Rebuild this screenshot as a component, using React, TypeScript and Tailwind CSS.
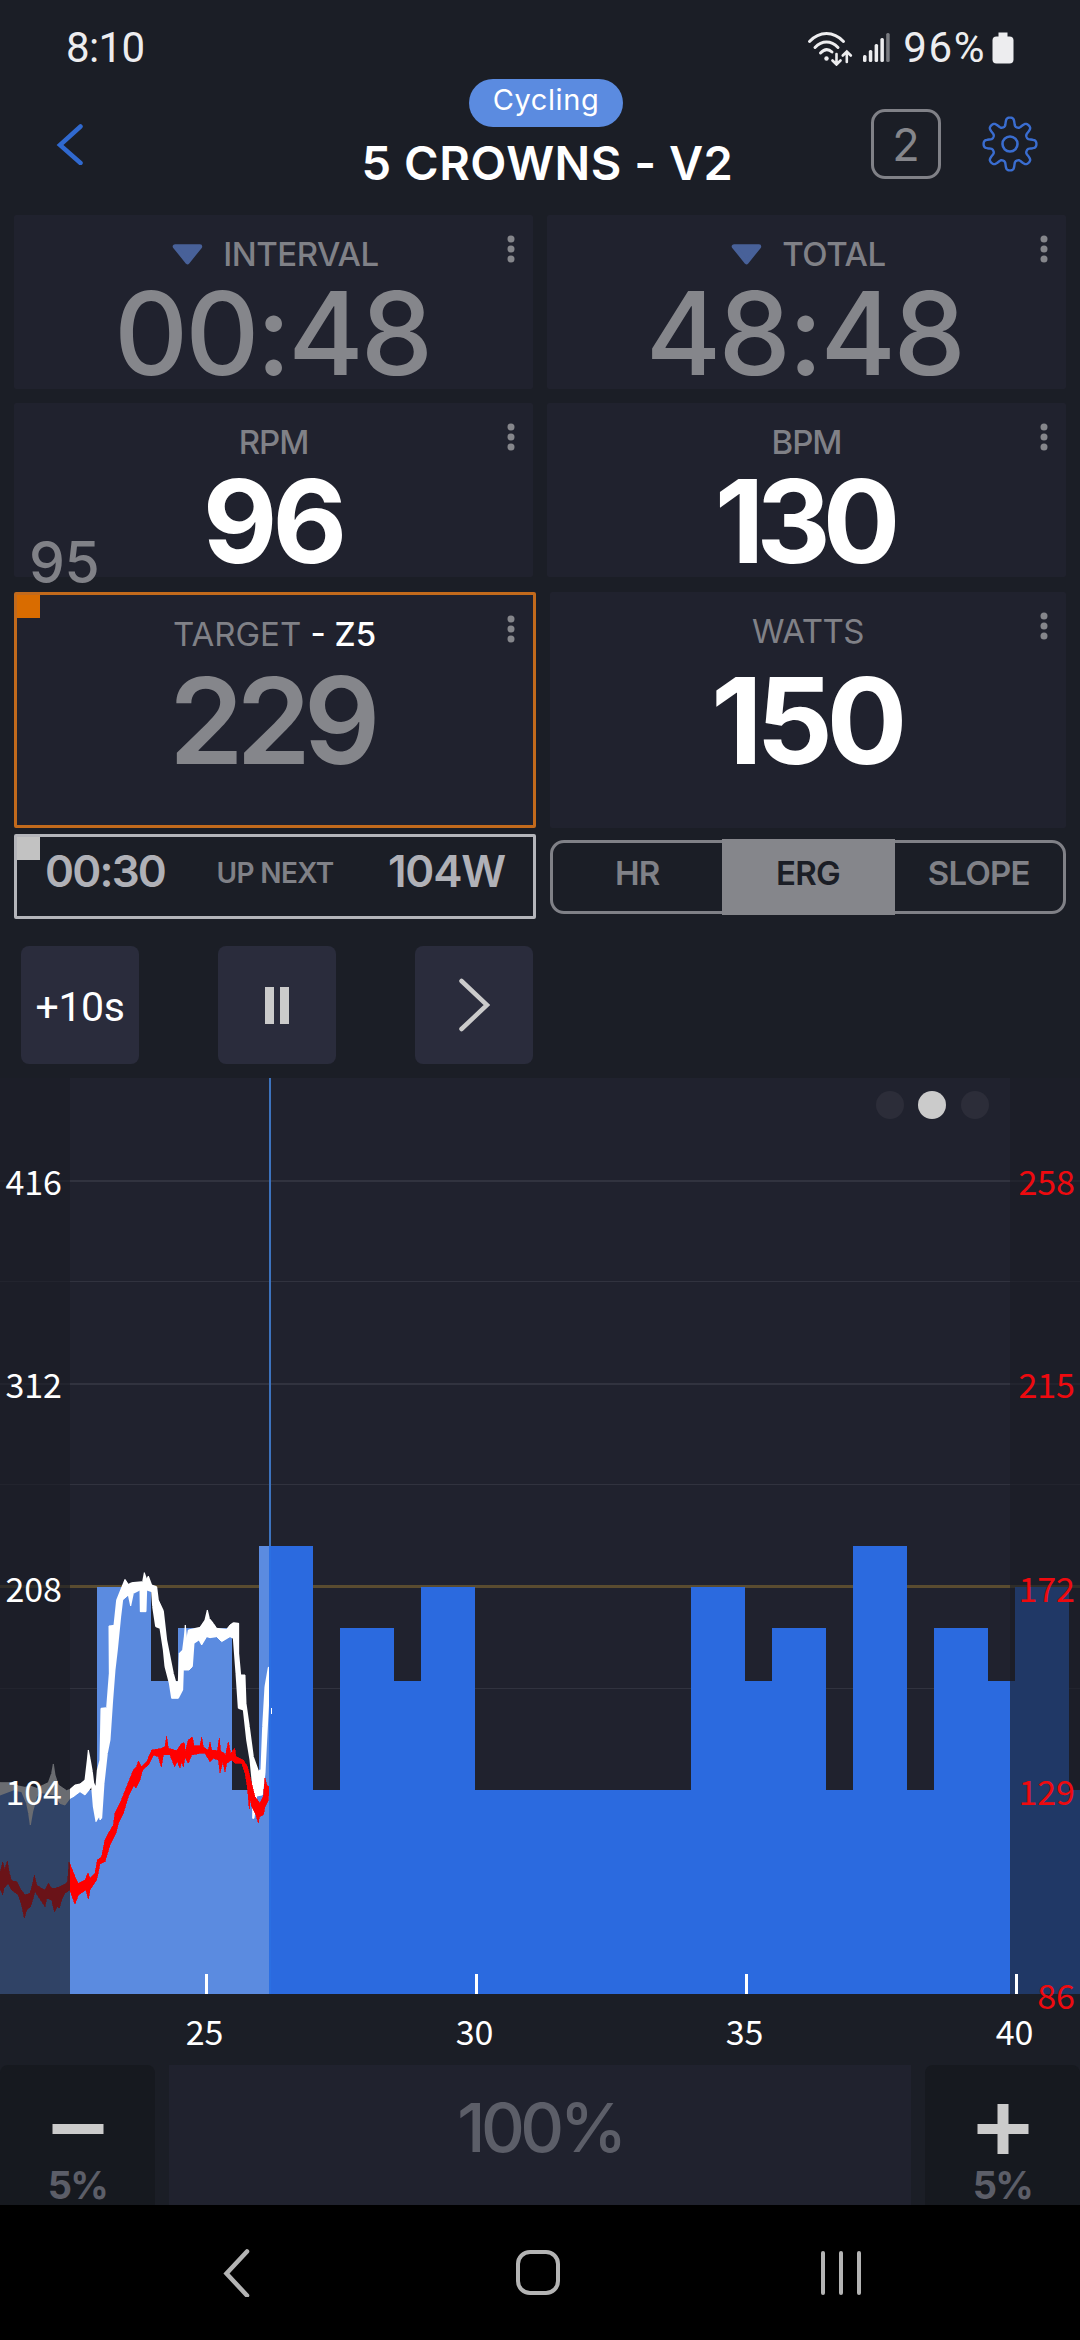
import clsx from 'clsx';
import { ReactNode } from 'react';

type Segment = { start: number; end: number; top: number };

// Workout blocks: x range and top edge, in chart pixels
const segments: Segment[] = [
  { start: 0, end: 97, top: 711.5 },
  { start: 97, end: 151, top: 509 },
  { start: 151, end: 178, top: 603 },
  { start: 178, end: 232, top: 550 },
  { start: 232, end: 259, top: 711.5 },
  { start: 259, end: 313, top: 468 },
  { start: 313, end: 340, top: 711.5 },
  { start: 340, end: 394, top: 550 },
  { start: 394, end: 421, top: 603 },
  { start: 421, end: 475, top: 509 },
  { start: 475, end: 691, top: 711.5 },
  { start: 691, end: 745, top: 509 },
  { start: 745, end: 772, top: 603 },
  { start: 772, end: 826, top: 550 },
  { start: 826, end: 853, top: 711.5 },
  { start: 853, end: 907, top: 468 },
  { start: 907, end: 934, top: 711.5 },
  { start: 934, end: 988, top: 550 },
  { start: 988, end: 1015, top: 603 },
  { start: 1015, end: 1069, top: 509 },
  { start: 1069, end: 1080, top: 711.5 },
];

const PLAYHEAD = 269;
const BASELINE = 916;

const powerAxis = [
  { label: '416', y: 116.5 },
  { label: '312', y: 320 },
  { label: '208', y: 523.5 },
  { label: '104', y: 726.5 },
];

const heartAxis = [
  { label: '258', y: 116.5 },
  { label: '215', y: 320 },
  { label: '172', y: 523.5 },
  { label: '129', y: 726.5 },
  { label: '86', y: 930.5 },
];

const timeAxis = [
  { label: '25', x: 206.5 },
  { label: '30', x: 476.5 },
  { label: '35', x: 746.5 },
  { label: '40', x: 1016.5 },
];

// Sampled traces (upper edge, then lower edge backwards), three units per pixel
const powerTrace =
  '0,728 35,728 55,738 75,742 90,738 110,745 130,735 145,728 155,700 160,672 165,705 175,735 200,752 210,748 225,735 240,732 255,720 262,660 265,630 270,655 277,695 281,728 285,738 288,738 292,690 300,660 303,505 320,503 328,400 327,258 342,256 350,180 362,150 375,118 385,133 395,128 428,125 433,98 440,118 445,108 455,135 470,140 475,180 490,212 500,300 520,400 527,425 535,425 538,340 548,330 553,290 556,255 560,300 565,270 600,262 615,240 622,210 628,235 640,250 650,265 680,268 690,255 700,248 716,250 716,340 722,405 735,405 738,490 748,560 760,650 775,692 783,690 788,560 795,440 805,382 807,382 807,470 800,600 795,700 787,765 770,768 762,835 758,835 758,740 750,660 740,600 730,510 715,505 708,400 700,295 690,290 665,305 650,290 630,293 620,290 605,315 597,300 582,310 577,380 567,390 550,390 548,450 535,475 515,475 508,430 495,380 490,330 480,265 467,260 458,200 455,155 440,150 438,215 421,215 420,150 400,160 392,198 385,165 368,180 362,230 352,330 345,390 338,480 330,600 322,640 312,730 305,835 300,840 298,828 288,845 280,800 275,740 255,765 240,755 220,770 210,775 195,795 180,790 165,765 125,758 110,770 98,815 91,855 86,820 80,790 65,755 40,750 0,765';

const heartTrace =
  '0,1000 8,965 14,990 22,962 28,1000 35,1022 50,1025 60,1045 75,1065 90,1060 98,1030 103,1005 110,1035 125,1045 135,1050 145,1030 155,1045 165,1045 180,1040 195,1032 203,1025 207,965 215,985 225,1010 235,1030 255,1020 264,998 270,1015 285,1000 292,960 305,950 315,900 325,880 340,855 345,820 360,790 380,740 400,690 410,680 415,663 425,680 440,665 455,630 470,628 485,625 495,620 500,588 505,625 530,632 545,610 553,608 556,635 565,600 577,590 582,618 600,618 605,592 610,622 625,630 630,605 635,630 652,632 658,595 662,635 672,638 676,648 685,605 692,640 704,625 708,650 730,660 742,680 752,720 765,770 780,790 790,770 795,715 800,735 807,740 805,780 795,800 790,825 778,830 775,850 768,825 755,800 750,775 748,808 742,740 735,700 725,670 705,670 695,660 680,670 675,695 668,665 660,700 655,660 640,655 630,665 615,640 600,640 575,645 565,670 555,650 550,680 545,665 540,685 532,665 524,680 510,645 490,645 484,682 475,650 460,645 445,675 428,690 420,720 408,745 402,735 385,770 370,820 355,850 348,880 330,915 315,965 300,972 290,1020 270,1050 265,1078 258,1050 235,1065 225,1092 218,1075 210,1050 195,1060 185,1080 178,1105 172,1100 163,1115 155,1080 140,1075 135,1100 125,1085 105,1055 92,1100 80,1110 73,1135 65,1095 55,1065 35,1050 25,1030 12,1045 8,1065 0,1045';

// Eight soft teeth around a circle
const gearPoints = Array.from({ length: 240 }, (_, i) => {
  const angle = (i / 240) * Math.PI * 2;
  const r = 22.2 + 4.2 * (Math.tanh(1.8 * Math.cos(8 * angle)) / Math.tanh(1.8));
  return `${(28 + r * Math.cos(angle)).toFixed(2)},${(28 + r * Math.sin(angle)).toFixed(2)}`;
}).join(' ');

const StatusBar = () => (
  <div className="flex h-[79px] items-center justify-between px-[66px] font-['Roboto',sans-serif] text-[42px] leading-[42px] text-[#ededef]">
    <span className="mt-[17px] tracking-[-0.6px]">8:10</span>
    <div className="mt-4 flex items-center">
      <svg className="h-9 w-[46px]" viewBox="0 0 46 36" fill="none" stroke="currentColor">
        <g strokeWidth="3" strokeLinecap="round">
          <path d="M2.5 11.5C12.5 0.8 26.5 0.8 36.5 11.5" />
          <path d="M8 17.5C15 10.2 24 10.2 31 17.5" />
          <path d="M13.5 23C17.5 18.8 21.5 18.8 25 22" />
        </g>
        <circle cx="19.5" cy="28.5" r="2.2" fill="currentColor" stroke="none" />
        <path
          d="M29.5 24V34M25.5 30.5L29.5 34.5L33.5 30.5M39.8 32V22M35.8 25.5L39.8 21.5L43.8 25.5"
          strokeWidth="2.6"
          strokeLinecap="round"
        />
      </svg>
      <svg className="ml-[10px] h-[31px] w-[28px]" viewBox="0 0 28 31" fill="currentColor">
        <rect x="0" y="23" width="3.5" height="7" rx="1.5" />
        <rect x="5.8" y="18" width="3.5" height="12" rx="1.5" />
        <rect x="11.6" y="12" width="3.5" height="18" rx="1.5" />
        <rect x="17.4" y="6" width="3.5" height="24" rx="1.5" />
        <rect x="23.2" y="1" width="3.5" height="29" rx="1.5" opacity="0.45" />
      </svg>
      <span className="mt-px ml-[12px] text-[42px] tracking-[1.6px]">96%</span>
      <svg className="ml-[6px] h-8 w-[22px]" viewBox="0 0 22 32" fill="currentColor">
        <path d="M6.5 0.5h9v4.5h-9z" />
        <rect x="0.5" y="4.5" width="21" height="27" rx="4" />
      </svg>
    </div>
  </div>
);

const Header = () => (
  <header className="flex h-[136px] justify-between">
    <button className="flex h-[130px] w-[363px] items-center pl-[56px]">
      <svg className="h-[42px] w-7" viewBox="0 0 28 42" fill="none" stroke="#3069cf">
        <path d="M24.5 3.5L4 22L24.5 40" strokeWidth="4.5" strokeLinecap="round" />
      </svg>
    </button>
    <div className="flex w-[369px] flex-col items-center">
      <span className="mr-[3px] flex h-12 w-[154px] items-center justify-center rounded-full bg-[#5b8be0] pb-[6px] text-[29px] tracking-[0.6px] text-white">
        Cycling
      </span>
      <h1 className="mt-[11px] text-center text-[47px] leading-[50px] font-semibold tracking-[0.5px] whitespace-nowrap text-white">
        5 CROWNS - V2
      </h1>
    </div>
    <div className="flex w-[348px] justify-end gap-[41px] pt-[30px] pr-[42px]">
      <span className="flex size-[70px] items-center justify-center rounded-[14px] border-3 border-[#808187] text-[45px] leading-none text-[#85868b]">
        2
      </span>
      <svg className="mt-[7px] size-14" viewBox="0 0 56 56" fill="none" stroke="#3a6dd0" strokeWidth="2.4">
        <polygon points={gearPoints} strokeLinejoin="round" />
        <circle cx="28" cy="28" r="7.5" strokeWidth="2.6" />
      </svg>
    </div>
  </header>
);

type MetricCardProps = {
  label: ReactNode;
  value: string;
  countdown?: boolean;
  className?: string;
  labelClassName?: string;
  valueClassName?: string;
  children?: ReactNode;
};

const MetricCard = ({
  label,
  value,
  countdown,
  className,
  labelClassName,
  valueClassName,
  children,
}: MetricCardProps) => (
  <div className={clsx('relative flex flex-col items-center bg-[#20222e]', className)}>
    <div
      className={clsx(
        'flex h-10 items-center text-[33px] leading-10 whitespace-nowrap text-[#808187]',
        labelClassName,
      )}
    >
      {countdown && (
        <svg className="mr-[20px] h-[22px] w-[31px]" viewBox="0 0 31 22" fill="#486199" stroke="#486199">
          <path d="M3 3.5H28L15.5 19Z" strokeWidth="4.5" strokeLinejoin="round" />
        </svg>
      )}
      {label}
    </div>
    <div className={clsx('whitespace-nowrap', valueClassName)}>{value}</div>
    <svg className="absolute top-[20px] right-[18px] h-[28px] w-2" viewBox="0 0 8 28" fill="#85868b">
      <circle cx="4" cy="4" r="3.5" />
      <circle cx="4" cy="14" r="3.5" />
      <circle cx="4" cy="24" r="3.5" />
    </svg>
    {children}
  </div>
);

const UpNext = () => (
  <div className="relative flex h-[85px] w-[522px] justify-between rounded-xs border-3 border-[#b4b5ba] pt-[8px] pr-[28px] pl-[28px] text-[44px] leading-[52px] font-semibold text-[#b0b1b7]">
    <span className="absolute top-0 left-0 size-[23px] bg-[#c2c2c2]" />
    <span className="tracking-[-1.8px]">00:30</span>
    <span className="pt-[2px] pr-[3px] text-[28px] tracking-[-0.6px] text-[#808187]">UP NEXT</span>
    <span className="tracking-[-1.2px]">104W</span>
  </div>
);

const ModeSwitch = () => (
  <div className="mt-[6px] flex h-[74px] w-[516px] rounded-[14px] border-3 border-[#808187] text-[33px] font-semibold tracking-[-0.8px] text-[#808187]">
    <span className="flex flex-1 justify-center pt-[8px] leading-[44px]">HR</span>
    <span className="-my-[4px] flex w-[173px] justify-center bg-[#85868b] pt-[12px] leading-[44px] text-[#1b1e26]">
      ERG
    </span>
    <span className="flex flex-1 justify-center pt-[8px] leading-[44px]">SLOPE</span>
  </div>
);

const Controls = () => (
  <div className="mt-[27px] ml-[21px] flex w-[512px] justify-between">
    <button className="size-[118px] rounded-lg bg-[#2a2c3c] pt-[5px] font-['Roboto',sans-serif] text-[41px] tracking-[-0.4px] text-white">
      +10s
    </button>
    <button className="flex size-[118px] items-center justify-center gap-[6px] rounded-lg bg-[#2a2c3c]">
      <span className="h-[37px] w-[9px] bg-[#cbcbcb]" />
      <span className="h-[37px] w-[9px] bg-[#cbcbcb]" />
    </button>
    <button className="flex size-[118px] items-center justify-center rounded-lg bg-[#2a2c3c]">
      <svg className="h-14 w-8" viewBox="0 0 32 56" fill="none" stroke="#cbcbcb">
        <path d="M3.5 4L29 28L3.5 52" strokeWidth="4.5" strokeLinecap="round" />
      </svg>
    </button>
  </div>
);

const bars = (color: string, from: number, to: number) =>
  segments
    .filter((s) => s.end > from && s.start < to)
    .map((s) => {
      const x = Math.max(s.start, from);
      return (
        <rect
          key={`${color}-${s.start}`}
          x={x}
          y={s.top}
          width={Math.min(s.end, to) - x}
          height={BASELINE - s.top}
          fill={color}
        />
      );
    });

const WorkoutChart = () => (
  <svg
    className="mt-[14px] block h-[987px] w-[1080px] font-['Noto_Sans_CJK_JP','Noto_Sans',sans-serif] text-[34px]"
    viewBox="0 0 1080 987"
  >
    <rect width="1080" height={BASELINE} fill="#20222e" />
    <g shapeRendering="crispEdges">
      <g fill="#31333f">
        <rect y="102" width="1080" height="2" />
        <rect y="203" width="1080" height="1" />
        <rect y="305" width="1080" height="2" />
        <rect y="406" width="1080" height="1" />
        <rect y="610" width="1080" height="1" />
      </g>
      <rect y="507" width="1080" height="3" fill="#5a4c30" />
      {bars('#5b8be0', 0, PLAYHEAD)}
      {bars('#2b6adf', PLAYHEAD, 1080)}
      <g transform="translate(0 462) scale(0.33333)">
        <polygon points={powerTrace} fill="#fff" stroke="#fff" strokeWidth="3" strokeLinejoin="bevel" />
        <rect x="813" y="505" width="3" height="17" fill="#fff" />
        <polygon points={heartTrace} fill="#f00" stroke="#f00" strokeWidth="2" strokeLinejoin="miter" />
      </g>
      <rect x={PLAYHEAD} width="2" height={468} fill="#3d73bd" />
      <rect x={PLAYHEAD} y={468} width="2" height={448} fill="#2b6fe3" />
      <g fill="#1a1d25" fillOpacity="0.65">
        <rect width="70" height={BASELINE} />
        <rect x="1010" width="70" height={BASELINE} />
      </g>
    </g>

    {/* Page indicator */}
    <circle cx="890" cy="27" r="14" fill="#2c2d39" />
    <circle cx="932" cy="27" r="14" fill="#cbcbcb" />
    <circle cx="975" cy="27" r="14" fill="#2c2d39" />

    <g fill="#fff">
      {timeAxis.map(({ label, x }) => (
        <g key={label}>
          <rect x={x - 1.5} y="896" width="3" height="20" />
          <text x={x - 2} y="967" textAnchor="middle">
            {label}
          </text>
        </g>
      ))}
      {powerAxis.map(({ label, y }) => (
        <text key={label} x="62" y={y} textAnchor="end">
          {label}
        </text>
      ))}
    </g>
    <g fill="#ee0a0f">
      {heartAxis.map(({ label, y }) => (
        <text key={label} x="1075" y={y} textAnchor="end">
          {label}
        </text>
      ))}
    </g>
  </svg>
);

const StepButton = ({ plus }: { plus?: boolean }) => (
  <button className="flex w-[155px] flex-col items-center rounded-t-lg bg-[#16191f] pt-[38px]">
    <svg className="h-[52px] w-[52px] shrink-0" viewBox="0 0 52 52" fill="#cbcbcb">
      <rect x="0.5" y="21" width="51" height="10" />
      {plus && <rect x="20.5" y="1" width="11" height="50" />}
    </svg>
    <span className="mt-[9px] text-[38px] leading-[42px] font-bold tracking-[-1.8px] text-[#5c5e68]">5%</span>
  </button>
);

const IntensityBar = () => (
  <div className="flex h-[140px] gap-[14px]">
    <StepButton />
    <div className="flex-1 bg-[#20222e] pt-[32px] text-center text-[68px] leading-[60px] font-medium tracking-[-4.5px] text-[#5c5e68]">
      100%
    </div>
    <StepButton plus />
  </div>
);

const NavigationBar = () => (
  <div className="flex h-[135px] items-center bg-black">
    <svg className="ml-[222px] h-12 w-7" viewBox="0 0 28 48" fill="none" stroke="#b4b4b4">
      <path d="M25 2.5L4.5 24.5L25 46.5" strokeWidth="4.5" strokeLinecap="round" />
    </svg>
    <span className="ml-[266px] h-[45px] w-[44px] rounded-[14px] border-4 border-[#b4b4b4]" />
    <div className="ml-[261px] flex gap-[14px]">
      <span className="h-11 w-1 rounded-full bg-[#b4b4b4]" />
      <span className="h-11 w-1 rounded-full bg-[#b4b4b4]" />
      <span className="h-11 w-1 rounded-full bg-[#b4b4b4]" />
    </div>
  </div>
);

export default function App() {
  return (
    <div className="flex h-[2340px] w-[1080px] flex-col overflow-hidden bg-[#1b1e26] font-['Inter',sans-serif]">
      <StatusBar />
      <Header />

      <div className="grid grid-cols-2 gap-[14px] px-[14px]">
        <MetricCard
          className="h-[174px] rounded-xs pt-[19px]"
          labelClassName="ml-[4px] font-medium tracking-[-0.5px]"
          valueClassName="mt-[10px] pr-[3px] text-[115px] leading-[100px] font-medium tracking-[-3px] text-[#85868b]"
          label="INTERVAL"
          value="00:48"
          countdown
        />
        <MetricCard
          className="h-[174px] rounded-xs pt-[19px]"
          labelClassName="ml-[4px] font-medium tracking-[-0.4px]"
          valueClassName="mt-[10px] pr-[4px] text-[115px] leading-[100px] font-medium tracking-[-2.6px] text-[#85868b]"
          label="TOTAL"
          value="48:48"
          countdown
        />
        <MetricCard
          className="h-[174px] rounded-xs pt-[19px]"
          labelClassName="font-medium tracking-[-1px]"
          valueClassName="mt-[10px] pr-[2px] text-[115px] leading-[100px] font-bold tracking-[-5px] text-white"
          label="RPM"
          value="96"
        >
          <span className="absolute top-[130px] left-[15px] text-[57px] leading-[60px] font-medium tracking-[-0.5px] text-[#808187]">
            95
          </span>
        </MetricCard>
        <MetricCard
          className="h-[174px] rounded-xs pt-[19px]"
          labelClassName="font-medium tracking-[-1px]"
          valueClassName="mt-[10px] pr-[6px] text-[115px] leading-[100px] font-bold tracking-[-8px] text-white"
          label="BPM"
          value="130"
        />
      </div>

      <div className="mt-[15px] flex gap-[14px] px-[14px]">
        <MetricCard
          className="h-[236px] w-[522px] rounded-xs border-3 border-[#c26a1c] pt-[19px]"
          labelClassName="mr-[1px]"
          valueClassName="mt-[17px] pr-[8px] text-[120px] leading-[100px] font-semibold tracking-[-7.5px] text-[#85868b]"
          label={
            <>
              TARGET&nbsp;<span className="font-medium text-white">- Z5</span>
            </>
          }
          value="229"
        >
          <span className="absolute top-0 left-0 size-[23px] bg-[#d96c00]" />
        </MetricCard>
        <MetricCard
          className="h-[236px] w-[516px] rounded-xs pt-[19px]"
          labelClassName="tracking-[-0.5px]"
          valueClassName="mt-[20px] pr-[4px] text-[120px] leading-[100px] font-bold tracking-[-6.5px] text-white"
          label="WATTS"
          value="150"
        />
      </div>

      <div className="mt-[6px] flex gap-[14px] px-[14px]">
        <UpNext />
        <ModeSwitch />
      </div>

      <Controls />
      <WorkoutChart />
      <IntensityBar />
      <NavigationBar />
    </div>
  );
}
